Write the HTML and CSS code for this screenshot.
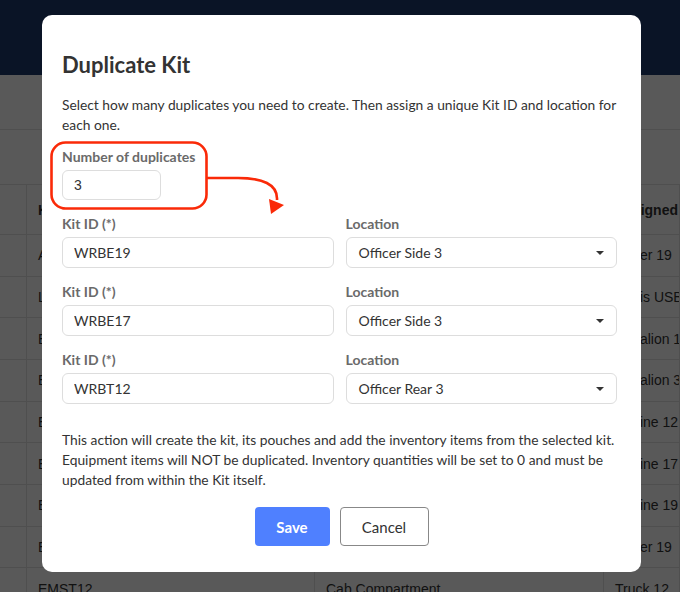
FILE: index.html
```html
<!DOCTYPE html>
<html lang="en">
<head>
<meta charset="UTF-8" />
<meta name="viewport" content="width=device-width, initial-scale=1.0" />
<title>Kits</title>
<link rel="stylesheet" href="styles.css">
</head>
<body>

<header class="topbar"></header>
<div class="toolbar"></div>
<div class="filters"></div>

<div class="kit-table">
  <div class="row head">
    <div class="cell"></div>
    <div class="cell">Kit ID</div>
    <div class="cell">Location</div>
    <div class="cell">Assigned To</div>
  </div>
  <div class="row"><div class="cell"></div><div class="cell">AMST19</div><div class="cell">Officer Side</div><div class="cell">Tower 19</div></div>
  <div class="row"><div class="cell"></div><div class="cell">LSBE12</div><div class="cell">Rear Compartment</div><div class="cell">Davis USB</div></div>
  <div class="row"><div class="cell"></div><div class="cell">EMBT11</div><div class="cell">Driver Side</div><div class="cell">Battalion 1</div></div>
  <div class="row"><div class="cell"></div><div class="cell">EMBT13</div><div class="cell">Driver Side</div><div class="cell">Battalion  3</div></div>
  <div class="row"><div class="cell"></div><div class="cell">EMEN12</div><div class="cell">Cab Compartment</div><div class="cell">Engine 12</div></div>
  <div class="row"><div class="cell"></div><div class="cell">EMEN17</div><div class="cell">Cab Compartment</div><div class="cell">Engine 17</div></div>
  <div class="row"><div class="cell"></div><div class="cell">EMEN19</div><div class="cell">Cab Compartment</div><div class="cell">Engine 19</div></div>
  <div class="row"><div class="cell"></div><div class="cell">EMOF19</div><div class="cell">Officer Side</div><div class="cell">Tower 19</div></div>
  <div class="row"><div class="cell"></div><div class="cell">EMST12</div><div class="cell">Cab Compartment</div><div class="cell">Truck 12</div></div>
</div>

<div class="backdrop">
  <div class="modal">
    <h2 class="modal-title">Duplicate Kit</h2>
    <p class="intro">Select how many duplicates you need to create. Then assign a unique Kit ID and location for each one.</p>

    <label class="field-label">Number of duplicates</label>
    <input class="count-input" type="text" value="3">

    <div class="dup-grid">
      <div class="field">
        <label class="field-label">Kit ID (*)</label>
        <input class="text-input" type="text" value="WRBE19">
      </div>
      <div class="field">
        <label class="field-label">Location</label>
        <div class="select-box">Officer Side 3<span class="caret"></span></div>
      </div>
      <div class="field">
        <label class="field-label">Kit ID (*)</label>
        <input class="text-input" type="text" value="WRBE17">
      </div>
      <div class="field">
        <label class="field-label">Location</label>
        <div class="select-box">Officer Side 3<span class="caret"></span></div>
      </div>
      <div class="field">
        <label class="field-label">Kit ID (*)</label>
        <input class="text-input" type="text" value="WRBT12">
      </div>
      <div class="field">
        <label class="field-label">Location</label>
        <div class="select-box">Officer Rear 3<span class="caret"></span></div>
      </div>
    </div>

    <p class="note">This action will create the kit, its pouches and add the inventory items from the selected kit. Equipment items will NOT be duplicated. Inventory quantities will be set to 0 and must be updated from within the Kit itself.</p>

    <div class="actions">
      <button class="btn btn-save">Save</button>
      <button class="btn btn-cancel">Cancel</button>
    </div>
  </div>

  <!-- annotation drawn over the screenshot -->
  <svg class="markup" width="680" height="592" viewBox="0 0 680 592">
    <rect x="51.5" y="142.5" width="155" height="66" rx="14" fill="none" stroke="#fa2a08" stroke-width="2.6"/>
    <path d="M207 178 L238 178 C262 178 278 184 277 200" fill="none" stroke="#fa2a08" stroke-width="2.6"/>
    <polygon points="269,199 284,205 271,214" fill="#fa2a08"/>
  </svg>
</div>

</body>
</html>
```

FILE: styles.css
```css
body {
  margin: 0;
  font-family: 'Liberation Sans', Arial, sans-serif;
  font-size: 14px;
  color: #222;
  background: #fff;
}

.topbar {
  height: 75px;
  background: #1f3a6d;
}
.toolbar {
  height: 54px;
  border-bottom: 1px solid #e2e2e2;
}
.filters {
  height: 54px;
  border-bottom: 1px solid #e2e2e2;
}

.row {
  display: grid;
  grid-template-columns: 27px 288px 289px 1fr;
  height: 40.67px;
  border-bottom: 1px solid #e2e2e2;
}
.row.head {
  height: 49px;
  font-weight: bold;
}
.cell {
  display: flex;
  align-items: center;
  padding-left: 11px;
  border-right: 1px solid #e2e2e2;
  white-space: nowrap;
  overflow: hidden;
  color: #333;
}
.row .cell:first-child {
  padding-left: 0;
}

/* modal */
.backdrop {
  position: fixed;
  inset: 0;
  background: rgba(0,0,0,0.65);
  padding: 15px 0 0 42px;
}
.modal {
  width: 599px;
  box-sizing: border-box;
  background: #fff;
  border-radius: 10px;
  padding: 37px 24px 26px 20px;
  font-family: 'Lato', sans-serif;
  color: #333;
}
.modal-title {
  margin: 0 0 17px;
  font-size: 22px;
  line-height: 26px;
  font-weight: bold;
  color: #333;
}
.intro,
.note {
  margin: 0;
  font-size: 13.8px;
  line-height: 20px;
}
.intro {
  margin-bottom: 13px;
}
.field-label {
  display: block;
  font-size: 14px;
  line-height: 18px;
  font-weight: bold;
  color: #6a6a6a;
  margin-bottom: 4px;
}
.count-input {
  display: block;
  width: 99px;
  height: 30px;
  box-sizing: border-box;
  border: 1px solid #ddd;
  border-radius: 6px;
  padding: 0 11px;
  font-family: 'Liberation Sans', Arial, sans-serif;
  font-size: 14px;
  color: #333;
}
.dup-grid {
  display: grid;
  grid-template-columns: 1fr 1fr;
  column-gap: 12px;
  row-gap: 15px;
  margin-top: 15px;
}
.text-input,
.select-box {
  display: block;
  width: 100%;
  height: 31px;
  box-sizing: border-box;
  border: 1px solid #ddd;
  border-radius: 6px;
  padding: 0 12px 0 11px;
  font-family: 'Lato', sans-serif;
  font-size: 14px;
  color: #333;
}
.select-box {
  display: flex;
  align-items: center;
  justify-content: space-between;
  padding-left: 12px;
}
.caret {
  width: 0;
  height: 0;
  border-left: 4px solid transparent;
  border-right: 4px solid transparent;
  border-top: 4px solid #333;
}
.note {
  margin-top: 26px;
}
.actions {
  display: flex;
  justify-content: center;
  gap: 10px;
  margin-top: 17px;
  padding-left: 4px;
}
.btn {
  height: 39px;
  border-radius: 4px;
  font-family: 'Lato', sans-serif;
  font-size: 15px;
  cursor: pointer;
}
.btn-save {
  width: 75px;
  background: #4f80ff;
  border: none;
  color: #fff;
  font-weight: bold;
}
.btn-cancel {
  width: 89px;
  background: #fff;
  border: 1px solid #888;
  color: #333;
}

.markup {
  position: absolute;
  top: 0;
  left: 0;
  pointer-events: none;
}
```
